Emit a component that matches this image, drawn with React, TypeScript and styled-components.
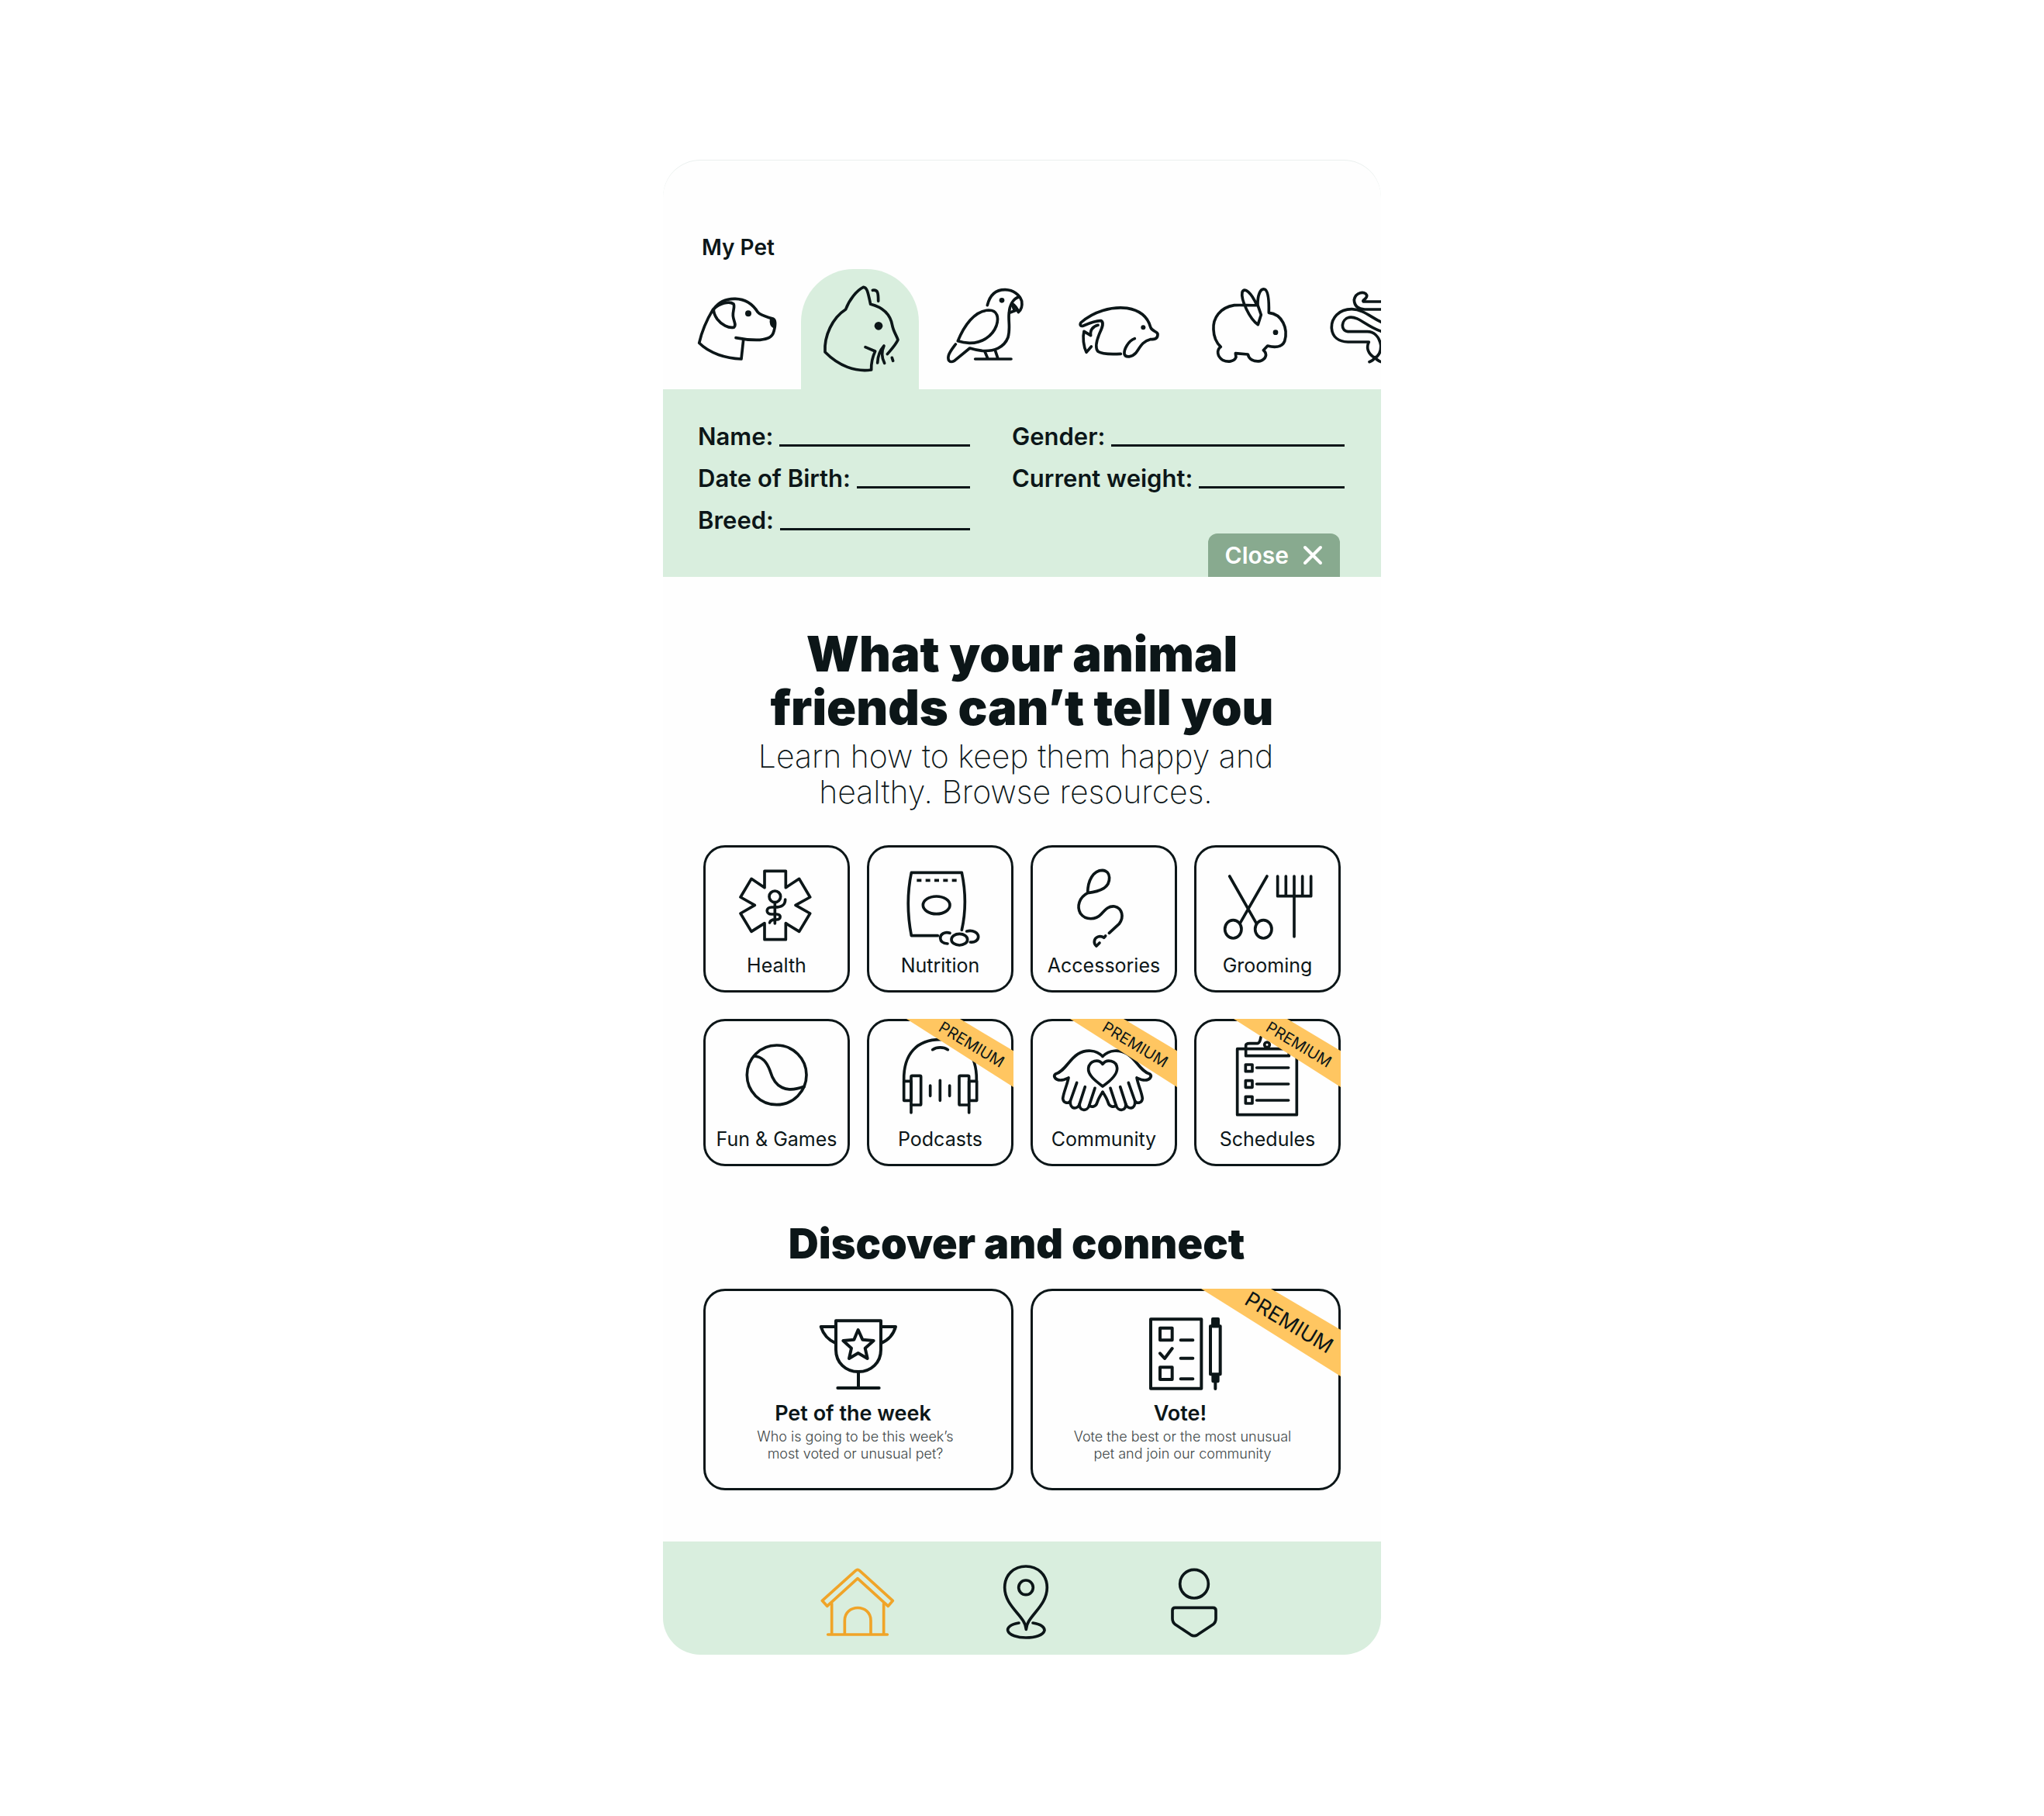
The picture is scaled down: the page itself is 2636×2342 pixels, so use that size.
import React from "react";
import styled, { createGlobalStyle } from "styled-components";

const ink = "#0c1618";
const mint = "#d9eede";
const amber = "#ffc661";

const GlobalStyle = createGlobalStyle`
  *, *::before, *::after { box-sizing: border-box; }
  body {
    margin: 0;
    background: #fff;
    color: ${ink};
    font-family: Inter, "Liberation Sans", sans-serif;
  }
  h1, h2, h3, p { margin: 0; }
  button { font: inherit; color: inherit; border: 0; padding: 0; background: none; cursor: pointer; }
`;

const Page = styled.div`
  display: flex;
  justify-content: center;
  padding: 206px 24px;
`;

const Phone = styled.main`
  display: flex;
  flex-direction: column;
  width: 100%;
  max-width: 926px;
  overflow: hidden;
  background: #fefefe;
  border-radius: 48px;
  box-shadow: inset 0 1px 0 #eaf0ee;
`;

const Title = styled.h2`
  padding: 97px 50px 0;
  margin-bottom: 12px;
  font-size: 28px;
  line-height: 32px;
  font-weight: 600;
`;

const PetTabs = styled.div`
  display: flex;
  gap: 16px;
  padding-left: 10px;
  overflow: hidden;
`;

const PetTab = styled.button<{ $active?: boolean }>`
  flex: none;
  display: flex;
  border-radius: 68px 68px 0 0;
  background: ${(p) => (p.$active ? mint : "transparent")};
`;

const Drawing = styled.svg<{ $w?: number }>`
  display: block;
  fill: none;
  stroke: currentColor;
  stroke-width: ${(p) => p.$w ?? 11};
  stroke-linecap: round;
  stroke-linejoin: round;

  .solid { fill: currentColor; }
  .dot { fill: currentColor; stroke: none; }
`;

const PetForm = styled.form`
  display: grid;
  grid-template-columns: minmax(0, 9fr) minmax(0, 11fr);
  grid-template-rows: repeat(3, 54px) 46px;
  column-gap: 54px;
  padding: 34px 47px 0 45px;
  background: ${mint};
`;

const Field = styled.label`
  display: flex;
  align-items: center;
  gap: 8px;
  font-size: 31px;
  line-height: 36px;
  font-weight: 600;
  white-space: nowrap;
`;

const Line = styled.input`
  flex: 1;
  width: 0;
  min-width: 0;
  height: 26px;
  padding: 0;
  border: 0;
  border-bottom: 3px solid ${ink};
  background: transparent;
  color: inherit;
  font: inherit;
  font-size: 20px;
  outline: none;
`;

const CloseButton = styled.button`
  grid-column: 2;
  grid-row: 3 / span 2;
  place-self: end;
  display: flex;
  align-items: center;
  gap: 18px;
  height: 56px;
  margin-right: 6px;
  padding: 0 22px;
  border-radius: 12px 12px 0 0;
  background: #88aa8f;
  color: #fff;
  font-size: 30px;
  font-weight: 600;
`;

const Intro = styled.header`
  padding: 65px 52px 0;
  text-align: center;
`;

const Headline = styled.h1`
  font-size: 63px;
  line-height: 69px;
  font-weight: 900;
`;

const Lead = styled.p`
  margin-top: 5px;
  padding-right: 16px;
  font-size: 41px;
  line-height: 46px;
  font-weight: 200;
`;

const Tiles = styled.nav`
  display: grid;
  grid-template-columns: repeat(4, 1fr);
  gap: 34px 22px;
  padding: 46px 52px 0;
`;

const Tile = styled.button`
  position: relative;
  display: flex;
  flex-direction: column;
  align-items: center;
  height: 190px;
  border: 3px solid ${ink};
  border-radius: 28px;
  font-size: 25px;
  line-height: 32px;
  white-space: nowrap;
`;

const SectionTitle = styled.h2`
  padding: 70px 66px 28px 52px;
  font-size: 54px;
  line-height: 60px;
  font-weight: 900;
  text-align: center;
`;

const Cards = styled.section`
  display: grid;
  grid-template-columns: repeat(2, 1fr);
  gap: 22px;
  padding: 0 52px 66px;
`;

const Card = styled.article`
  position: relative;
  display: flex;
  flex-direction: column;
  align-items: center;
  height: 260px;
  border: 3px solid ${ink};
  border-radius: 28px;
`;

const CardTitle = styled.h3`
  padding-right: 14px;
  font-size: 27px;
  line-height: 32px;
  font-weight: 600;
`;

const CardText = styled.p`
  margin-top: 3px;
  padding-right: 8px;
  font-size: 18px;
  line-height: 22px;
  font-weight: 300;
  text-align: center;
  white-space: pre-line;
  color: #3d4647;
`;

const Ribbon = styled.span<{ $large?: boolean }>`
  position: absolute;
  top: -3px;
  right: -3px;
  display: grid;
  place-items: center;
  width: ${(p) => (p.$large ? 180 : 138)}px;
  height: ${(p) => (p.$large ? 113 : 88)}px;
  padding: ${(p) => (p.$large ? "0 0 26px 46px" : "0 0 22px 30px")};
  background: ${amber};
  clip-path: polygon(0 0, 50% 0, 100% 47%, 100% 100%);
  font-size: ${(p) => (p.$large ? 27 : 20)}px;
  font-weight: 400;
`;

const RibbonText = styled.span`
  transform: rotate(31deg);
`;

const BottomBar = styled.nav`
  display: flex;
  justify-content: center;
  align-items: center;
  gap: 97px;
  height: 146px;
  padding-left: 10px;
  background: ${mint};
`;

const BarLink = styled.a<{ $active?: boolean }>`
  color: ${(p) => (p.$active ? "#f0a428" : ink)};
`;

type Glyph = { name: string; box: string; art: React.ReactNode };

const pets: Glyph[] = [
  {
    name: "Dog",
    box: "75 471 456 465",
    art: (
      <>
        <path d="M241 626C262 596 292 585 325 586C365 587 392 606 412 638C424 652 450 656 472 664C482 670 480 690 474 712C468 736 450 742 420 745C390 746 355 743 327 737" />
        <path d="M238 628C214 668 195 712 185 757C225 798 290 816 348 819L356 745" />
        <path d="M241 626C262 606 300 592 318 606C324 616 315 630 316 652C318 672 330 688 320 696C300 702 270 685 255 665C246 652 240 640 241 626Z" />
        <path className="solid" d="M464 666C476 664 479 680 476 694C466 692 461 680 464 666Z" />
        <circle className="dot" cx="375" cy="643" r="12" />
      </>
    ),
  },
  {
    name: "Cat",
    box: "579 471 456 465",
    art: (
      <>
        <path d="M828 773L866 789C857 808 850 830 851 861C790 870 725 846 672 792C668 730 700 660 752 627C765 590 795 553 820 541C834 540 838 560 848 607C900 620 925 650 932 688C936 712 950 730 954 745C945 765 930 780 913 800" />
        <path d="M856 553C876 550 878 562 878 595" />
        <path d="M875 834C876 805 885 785 900 768C890 790 890 812 902 835" />
        <path d="M931 814L935 826" />
        <circle className="dot" cx="879" cy="691" r="16" />
      </>
    ),
  },
  {
    name: "Parrot",
    box: "1083 471 456 465",
    art: (
      <>
        <path d="M1300 611C1310 570 1335 550 1370 551C1400 552 1425 570 1433 595C1436 615 1430 630 1420 638C1418 625 1405 610 1395 604" />
        <path d="M1422 579C1400 585 1386 610 1384 640C1380 670 1390 700 1380 735C1365 775 1325 790 1280 787C1258 785 1245 781 1232 777L1172 826C1155 835 1145 825 1150 805C1155 790 1165 778 1177 762" />
        <path d="M1395 604L1404 630M1386 640L1412 630" />
        <path d="M1186 749C1210 690 1250 632 1305 630C1340 630 1345 660 1335 690C1320 730 1280 758 1230 757C1210 756 1195 752 1186 749Z" />
        <path d="M1290 790L1302 818M1330 785L1341 818M1253 819H1392" />
        <circle className="dot" cx="1356" cy="592" r="10" />
      </>
    ),
  },
  {
    name: "Platypus",
    box: "177 471 456 465",
    art: (
      <>
        <path d="M460 740C435 750 418 780 420 800C425 815 450 812 465 795C480 775 490 750 520 743C540 743 550 740 549 722C545 710 525 712 521 695C510 655 480 630 430 622C370 615 300 635 252 678C246 688 252 694 262 690C285 680 315 670 330 671C345 680 330 705 322 725C312 750 305 775 318 790C335 802 370 801 406 799" />
        <path d="M318 688C300 692 286 706 290 728L264 712C258 735 262 770 273 793L292 771" />
        <circle className="dot" cx="493" cy="697" r="9" />
      </>
    ),
  },
  {
    name: "Rabbit",
    box: "681 471 456 465",
    art: (
      <>
        <path d="M933 611C900 612 870 609 845 611C790 620 762 660 765 705C766 735 778 758 793 772C775 785 780 810 800 823C820 832 845 830 852 812L850 797L898 801C902 820 920 830 945 827C968 820 975 800 958 785L974 768C1000 775 1030 775 1040 750C1055 700 1030 645 979 640C980 600 978 560 965 550C945 542 935 575 936 610L949 648L937 686C905 665 870 590 876 560C885 540 910 560 933 611" />
        <circle className="dot" cx="1005" cy="716" r="10" />
      </>
    ),
  },
  {
    name: "Snake",
    box: "1185 471 456 465",
    art: (
      <>
        <path d="M1430 597H1345C1338 590 1360 588 1358 572C1350 555 1315 560 1309 590C1310 615 1325 626 1350 627H1430" />
        <path d="M1430 683C1380 665 1350 627 1300 626C1250 626 1220 660 1222 700C1225 735 1250 752 1285 753H1366C1355 775 1362 800 1390 815C1405 805 1414 790 1412 765C1405 730 1385 713 1360 713H1285C1255 710 1258 665 1290 658C1330 652 1360 700 1430 717" />
        <path d="M1368 830C1380 826 1386 820 1390 812C1395 822 1405 828 1416 831" />
      </>
    ),
  },
];

const fingers = (
  <>
    <path d="M336 172C310 145 270 145 240 163C205 185 190 230 154 240C142 250 155 264 172 264C185 264 195 259 204 255C198 285 185 310 182 335C185 355 205 355 211 345L236 274" />
    <path d="M211 345C208 378 240 380 247 355L268 290" />
    <path d="M247 355C242 385 278 386 284 362L306 295" />
    <path d="M284 362C292 370 310 368 315 350C320 335 328 322 336 310" />
  </>
);

const topics: (Glyph & { premium?: boolean })[] = [
  {
    name: "Health",
    box: "30 42 549 408",
    art: (
      <>
        <path d="M258 133H340V197L392 163L434 234L378 265L434 297L392 367L340 335V398H258V335L207 367L165 297L220 265L165 234L207 163L258 197Z" />
        <circle cx="298" cy="232" r="22" />
        <path d="M298 256V336M338 243C338 265 325 273 298 273H285C262 273 262 300 285 300H305C324 300 322 321 305 321C290 320 280 323 278 333" />
      </>
    ),
  },
  {
    name: "Nutrition",
    box: "663 42 549 408",
    art: (
      <>
        <path d="M1021 361C1037 290 1037 215 1021 139H826C810 215 810 300 826 383H928" />
        <path d="M847 169H1003" strokeDasharray="18 16" strokeLinecap="butt" />
        <ellipse cx="923" cy="265" rx="52" ry="34" />
        <path d="M975 373C955 366 937 378 938 393C939 408 950 413 966 414" />
        <ellipse cx="1012" cy="398" rx="31" ry="22" />
        <path d="M1040 366C1065 360 1085 372 1085 388C1085 402 1070 410 1054 408" />
      </>
    ),
  },
  {
    name: "Accessories",
    box: "66 42 549 408",
    art: (
      <>
        <path d="M278 218C278 170 300 130 335 130C370 132 370 180 340 200C320 212 295 216 278 218C245 235 235 270 250 297C270 325 310 322 330 300C350 278 360 268 382 270C412 277 420 310 400 337L361 373" />
        <path d="M347 384L341 391C326 380 306 388 304 404C303 412 306 418 312 423L324 411" />
      </>
    ),
  },
  {
    name: "Grooming",
    box: "699 42 549 408",
    art: (
      <>
        <path d="M827 153L930 334M972 153L868 334" />
        <ellipse cx="841" cy="358" rx="32" ry="35" />
        <ellipse cx="958" cy="358" rx="32" ry="35" />
        <path d="M1013 153V230H1142V153M1045 153V230M1077 153V387M1109 153V230" />
      </>
    ),
  },
  {
    name: "Fun & Games",
    box: "30 36 549 408",
    art: (
      <>
        <circle cx="305" cy="244" r="115" />
        <path d="M217 171C250 172 268 195 280 230C298 292 340 315 411 289" />
      </>
    ),
  },
  {
    name: "Podcasts",
    box: "663 36 549 408",
    premium: true,
    art: (
      <>
        <path d="M797 265C795 160 850 107 937 107C1025 107 1080 160 1078 265" />
        <rect x="797" y="268" width="28" height="75" />
        <rect x="825" y="247" width="38" height="113" rx="4" />
        <rect x="1011" y="247" width="38" height="113" rx="4" />
        <rect x="1049" y="268" width="30" height="75" />
        <path d="M825 360V390M1049 360V390M899 285V325M937 265V343M974 285V325M908 146C925 135 950 135 967 146" />
      </>
    ),
  },
  {
    name: "Community",
    box: "66 36 549 408",
    premium: true,
    art: (
      <>
        {fingers}
        <g transform="translate(672 0) scale(-1 1)">{fingers}</g>
        <path d="M336 288C310 268 278 245 281 218C285 188 320 180 336 202C352 180 390 188 392 218C393 245 362 270 336 288Z" />
      </>
    ),
  },
  {
    name: "Schedules",
    box: "699 36 549 408",
    premium: true,
    art: (
      <>
        <rect x="857" y="143" width="230" height="255" />
        <path d="M890 143V170H1057V143M890 143V130C890 125 895 122 905 122H935C945 120 945 110 948 98" />
        <circle cx="972" cy="127" r="10" />
        <path d="M889 204H915V230H889ZM889 266H915V292H889ZM889 328H915V354H889ZM932 216H1055M932 279H1055M932 342H1055" />
      </>
    ),
  },
];

const features: (Glyph & { text: string; premium?: boolean })[] = [
  {
    name: "Pet of the week",
    text: "Who is going to be this week’s\nmost voted or unusual pet?",
    box: "30 48 1182 426",
    art: (
      <>
        <path d="M534 163H708V275C708 325 670 360 621 360C572 360 534 325 534 275Z" />
        <path d="M534 186H476C485 215 505 238 534 250M708 186H765C757 215 737 238 708 250M621 360V423M541 423H701" />
        <path d="M620 198L637 236L680 240L647 269L656 309L620 288L585 309L594 269L562 240L604 236Z" />
      </>
    ),
  },
  {
    name: "Vote!",
    text: "Vote the best or the most unusual\npet and join our community",
    box: "63 48 1182 426",
    premium: true,
    art: (
      <>
        <path d="M519 157H715V425H519ZM555 191H602V238H555ZM555 343H602V390H555ZM555 289L573 309L602 270M635 238H682M635 308H682M635 388H682" />
        <rect x="750" y="184" width="38" height="186" />
        <path className="solid" d="M759 156H780V184H759ZM760 372H779V397H760Z" />
        <path d="M769 400V426" />
      </>
    ),
  },
];

const places: Glyph[] = [
  {
    name: "Home",
    box: "-25 -9 360 360",
    art: (
      <>
        <path d="M148 64Q155 58 162 64L291 181L273 202L155 95L37 202L18 181Z" />
        <path d="M55 192V312M256 192V312M40 312H270M105 310V258C105 192 206 192 206 258V310" />
      </>
    ),
  },
  {
    name: "Places",
    box: "625 -9 360 360",
    art: (
      <>
        <path d="M806 292C804 240 723 205 723 130C723 80 760 48 805 48C850 48 887 80 887 130C887 205 808 240 806 292Z" />
        <circle cx="805" cy="130" r="28" />
        <path d="M778 267C745 272 733 285 735 296C740 315 775 324 805 324C840 324 872 315 877 296C877 285 865 272 832 267" />
      </>
    ),
  },
  {
    name: "Profile",
    box: "1277 -9 360 360",
    art: (
      <>
        <circle cx="1457" cy="116" r="55" />
        <path d="M1383 208H1530Q1541 208 1541 219V250Q1541 265 1530 273L1470 313Q1457 321 1444 313L1384 273Q1373 265 1373 250V219Q1373 208 1383 208Z" />
      </>
    ),
  },
];

const fields = ["Name", "Gender", "Date of Birth", "Current weight", "Breed"];

export default function App() {
  return (
    <>
      <GlobalStyle />
      <Page>
        <Phone>
          <Title>My Pet</Title>
          <PetTabs role="tablist">
            {pets.map((pet) => (
              <PetTab
                key={pet.name}
                type="button"
                role="tab"
                aria-label={pet.name}
                aria-selected={pet.name === "Cat"}
                $active={pet.name === "Cat"}
              >
                <Drawing viewBox={pet.box} width="152" height="155" aria-hidden="true">
                  {pet.art}
                </Drawing>
              </PetTab>
            ))}
          </PetTabs>
          <PetForm>
            {fields.map((name) => (
              <Field key={name}>
                {name}:
                <Line type="text" name={name} />
              </Field>
            ))}
            <CloseButton type="button">
              Close
              <Drawing viewBox="0 0 26 26" width="26" height="26" $w={4} aria-hidden="true">
                <path d="M3 3L23 23M23 3L3 23" />
              </Drawing>
            </CloseButton>
          </PetForm>

          <Intro>
            <Headline>
              What your animal
              <br />
              friends can’t tell you
            </Headline>
            <Lead>
              Learn how to keep them happy and
              <br />
              healthy. Browse resources.
            </Lead>
          </Intro>

          <Tiles>
            {topics.map((topic) => (
              <Tile key={topic.name} type="button">
                <Drawing viewBox={topic.box} width="183" height="136" aria-hidden="true">
                  {topic.art}
                </Drawing>
                {topic.name}
                {topic.premium && (
                  <Ribbon>
                    <RibbonText>PREMIUM</RibbonText>
                  </Ribbon>
                )}
              </Tile>
            ))}
          </Tiles>

          <SectionTitle>Discover and connect</SectionTitle>
          <Cards>
            {features.map((item) => (
              <Card key={item.name}>
                <Drawing viewBox={item.box} width="394" height="142" $w={12} aria-hidden="true">
                  {item.art}
                </Drawing>
                <CardTitle>{item.name}</CardTitle>
                <CardText>{item.text}</CardText>
                {item.premium && (
                  <Ribbon $large>
                    <RibbonText>PREMIUM</RibbonText>
                  </Ribbon>
                )}
              </Card>
            ))}
          </Cards>

          <BottomBar>
            {places.map((place) => (
              <BarLink
                key={place.name}
                href={"#" + place.name.toLowerCase()}
                aria-label={place.name}
                $active={place.name === "Home"}
              >
                <Drawing viewBox={place.box} width="120" height="120" aria-hidden="true">
                  {place.art}
                </Drawing>
              </BarLink>
            ))}
          </BottomBar>
        </Phone>
      </Page>
    </>
  );
}
